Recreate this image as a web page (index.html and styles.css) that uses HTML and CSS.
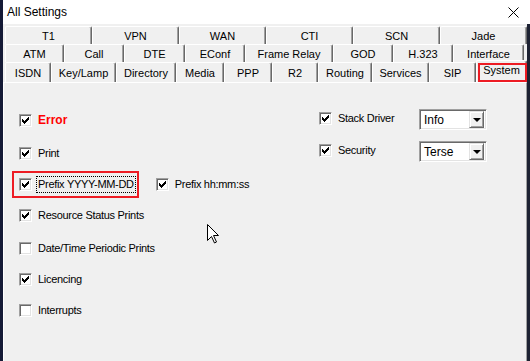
FILE: index.html
```html
<!DOCTYPE html>
<html lang="en">
<head>
    <meta charset="UTF-8">
    <title>All Settings</title>
    <link rel="stylesheet" href="styles.css">
</head>
<body>
    <div class="window">
        <div class="titlebar">
            <span class="title">All Settings</span>
            <svg class="close" width="11" height="11" viewBox="0 0 11 11">
                <path d="M0.5 0.5 L10.5 10.5 M10.5 0.5 L0.5 10.5" stroke="#000" stroke-width="1" fill="none"/>
            </svg>
        </div>

        <div class="dialog">
            <div class="tabs">
                <div class="tab-row row-back">
                    <div class="tab">T1</div>
                    <div class="tab">VPN</div>
                    <div class="tab">WAN</div>
                    <div class="tab">CTI</div>
                    <div class="tab">SCN</div>
                    <div class="tab">Jade</div>
                </div>
                <div class="tab-row row-mid">
                    <div class="tab">ATM</div>
                    <div class="tab">Call</div>
                    <div class="tab">DTE</div>
                    <div class="tab">EConf</div>
                    <div class="tab">Frame Relay</div>
                    <div class="tab">GOD</div>
                    <div class="tab">H.323</div>
                    <div class="tab">Interface</div>
                </div>
                <div class="tab-row row-front">
                    <div class="tab">ISDN</div>
                    <div class="tab">Key/Lamp</div>
                    <div class="tab">Directory</div>
                    <div class="tab">Media</div>
                    <div class="tab">PPP</div>
                    <div class="tab">R2</div>
                    <div class="tab">Routing</div>
                    <div class="tab">Services</div>
                    <div class="tab">SIP</div>
                    <div class="tab active">System</div>
                </div>
            </div>

            <div class="panel">
                <div class="col-left">
                    <div class="row">
                        <span class="box checked"><svg width="13" height="13" viewBox="0 0 13 13"><path d="M3 5h1v3h-1zM4 6h1v3h-1zM5 7h1v3h-1zM6 6h1v3h-1zM7 5h1v3h-1zM8 4h1v3h-1zM9 3h1v3h-1z"/></svg></span>
                        <span class="label error">Error</span>
                    </div>
                    <div class="row">
                        <span class="box checked"><svg width="13" height="13" viewBox="0 0 13 13"><path d="M3 5h1v3h-1zM4 6h1v3h-1zM5 7h1v3h-1zM6 6h1v3h-1zM7 5h1v3h-1zM8 4h1v3h-1zM9 3h1v3h-1z"/></svg></span>
                        <span class="label">Print</span>
                    </div>
                    <div class="row">
                        <div class="marked">
                            <span class="box checked"><svg width="13" height="13" viewBox="0 0 13 13"><path d="M3 5h1v3h-1zM4 6h1v3h-1zM5 7h1v3h-1zM6 6h1v3h-1zM7 5h1v3h-1zM8 4h1v3h-1zM9 3h1v3h-1z"/></svg></span>
                            <span class="label focused">Prefix YYYY-MM-DD</span>
                        </div>
                        <span class="box checked second"><svg width="13" height="13" viewBox="0 0 13 13"><path d="M3 5h1v3h-1zM4 6h1v3h-1zM5 7h1v3h-1zM6 6h1v3h-1zM7 5h1v3h-1zM8 4h1v3h-1zM9 3h1v3h-1z"/></svg></span>
                        <span class="label">Prefix hh:mm:ss</span>
                    </div>
                    <div class="row">
                        <span class="box checked"><svg width="13" height="13" viewBox="0 0 13 13"><path d="M3 5h1v3h-1zM4 6h1v3h-1zM5 7h1v3h-1zM6 6h1v3h-1zM7 5h1v3h-1zM8 4h1v3h-1zM9 3h1v3h-1z"/></svg></span>
                        <span class="label">Resource Status Prints</span>
                    </div>
                    <div class="row spaced">
                        <span class="box"></span>
                        <span class="label">Date/Time Periodic Prints</span>
                    </div>
                    <div class="row">
                        <span class="box checked"><svg width="13" height="13" viewBox="0 0 13 13"><path d="M3 5h1v3h-1zM4 6h1v3h-1zM5 7h1v3h-1zM6 6h1v3h-1zM7 5h1v3h-1zM8 4h1v3h-1zM9 3h1v3h-1z"/></svg></span>
                        <span class="label">Licencing</span>
                    </div>
                    <div class="row">
                        <span class="box"></span>
                        <span class="label">Interrupts</span>
                    </div>
                </div>

                <div class="col-right">
                    <div class="rrow">
                        <div class="rcheck">
                            <span class="box checked"><svg width="13" height="13" viewBox="0 0 13 13"><path d="M3 5h1v3h-1zM4 6h1v3h-1zM5 7h1v3h-1zM6 6h1v3h-1zM7 5h1v3h-1zM8 4h1v3h-1zM9 3h1v3h-1z"/></svg></span>
                            <span class="label">Stack Driver</span>
                        </div>
                        <div class="combo">
                            <span class="combo-text">Info</span>
                            <span class="combo-btn"><span class="arrow"></span></span>
                        </div>
                    </div>
                    <div class="rrow">
                        <div class="rcheck">
                            <span class="box checked"><svg width="13" height="13" viewBox="0 0 13 13"><path d="M3 5h1v3h-1zM4 6h1v3h-1zM5 7h1v3h-1zM6 6h1v3h-1zM7 5h1v3h-1zM8 4h1v3h-1zM9 3h1v3h-1z"/></svg></span>
                            <span class="label">Security</span>
                        </div>
                        <div class="combo">
                            <span class="combo-text">Terse</span>
                            <span class="combo-btn"><span class="arrow"></span></span>
                        </div>
                    </div>
                </div>

                <!-- mouse pointer over the panel -->
                <svg class="cursor" width="13" height="20" viewBox="0 0 13 20">
                    <path d="M0.5 0.5 V16.5 L4.5 12.5 L7.5 19 L9.5 18 L6.5 11.5 H11.5 Z" fill="#fff" stroke="#000" stroke-width="1"/>
                </svg>
            </div>
        </div>
    </div>
</body>
</html>
```

FILE: styles.css
```css
body {
    margin: 0;
    font-family: "Liberation Sans", Arial, sans-serif;
    font-size: 11px;
    color: #000;
    background-color: #f0f0f0;
}
.window {
    width: 530px;
    height: 361px;
    display: flex;
    flex-direction: column;
    overflow: hidden;
}
.titlebar {
    height: 24px;
    flex: none;
    background-color: #fff;
    border-left: 3px solid #151a36;
    padding-left: 4px;
    display: flex;
    align-items: center;
}
.title {
    font-size: 12px;
}
.close {
    margin-left: auto;
    margin-right: 11px;
}
.dialog {
    flex: 1;
    display: flex;
    flex-direction: column;
    background-color: #f0f0f0;
    border-left: 3px solid #151a36;
    border-right: 3px solid #1d2233;
}
.tabs {
    padding: 2px 0 0 2px;
}
.tab-row {
    display: grid;
    height: 18px;
}
.row-back {
    grid-template-columns: repeat(6, 1fr);
}
.row-mid {
    grid-template-columns: 59px 60px 61px 60px 88px 60px 60px 71px;
}
.row-front {
    grid-template-columns: 46px 65px 60px 48px 48px 46px 54px 57px 47px 51px;
    height: 20px;
}
.tab {
    display: flex;
    align-items: center;
    justify-content: center;
    border-top: 1px solid #fff;
    border-left: 1px solid #fff;
    border-right: 1px solid #696969;
    box-shadow: inset -1px 0 #a0a0a0;
    border-radius: 2px 2px 0 0;
    background-color: #f0f0f0;
    white-space: nowrap;
}
.tab.active {
    position: relative;
    margin-top: -2px;
    padding-bottom: 4px;
}
.tab.active::after {
    content: "";
    position: absolute;
    left: 1px;
    top: 2px;
    right: -1px;
    bottom: 0;
    border: 2px solid #ed1c24;
}
.panel {
    flex: 1;
    position: relative;
    display: flex;
    border-top: 1px solid #fff;
    border-left: 1px solid #fff;
    border-right: 1px solid #a0a0a0;
    padding-left: 15px;
}
.col-left {
    width: 300px;
    padding-top: 31px;
    display: flex;
    flex-direction: column;
    gap: 18px;
}
.row {
    height: 13px;
    display: flex;
    align-items: center;
}
.row:first-child {
    margin-bottom: 2px;
}
.row.spaced {
    margin-top: 2px;
}
.box {
    flex: none;
    width: 13px;
    height: 13px;
    box-sizing: border-box;
    background-color: #fff;
    border: 1px solid;
    border-color: #a0a0a0 #fff #fff #a0a0a0;
    box-shadow: inset 1px 1px #696969, inset -1px -1px #e3e3e3;
    position: relative;
}
.box svg {
    position: absolute;
    left: -1px;
    top: -1px;
}
.box.second {
    margin-left: 17px;
}
.label {
    margin-left: 4px;
    padding: 1px 1px 2px;
    border: 1px dotted transparent;
    white-space: nowrap;
    letter-spacing: -0.3px;
}
.label.focused {
    border-color: #000;
}
.error {
    color: #ff0000;
    font-weight: bold;
    font-size: 12px;
    letter-spacing: 0;
}
.marked {
    display: flex;
    align-items: center;
    height: 23px;
    margin-left: -7px;
    padding: 0 1px 0 5px;
    border: 2px solid #ed1c24;
}
.col-right {
    padding-top: 26px;
    display: flex;
    flex-direction: column;
    gap: 11px;
}
.rrow {
    display: grid;
    grid-template-columns: 100px 68px;
    align-items: center;
    height: 21px;
}
.rcheck {
    display: flex;
    align-items: center;
    margin-top: -2px;
}
.combo {
    height: 21px;
    box-sizing: border-box;
    display: flex;
    align-items: center;
    background-color: #fff;
    border: 1px solid;
    border-color: #a0a0a0 #fff #fff #a0a0a0;
    box-shadow: inset 1px 1px #696969, inset -1px -1px #e3e3e3;
    padding: 2px;
}
.combo-text {
    flex: 1;
    font-size: 12px;
    padding-left: 2px;
}
.combo-btn {
    width: 15px;
    height: 17px;
    box-sizing: border-box;
    background-color: #f0f0f0;
    border: 1px solid;
    border-color: #e3e3e3 #696969 #696969 #e3e3e3;
    box-shadow: inset 1px 1px #fff, inset -1px -1px #a0a0a0;
    display: flex;
    align-items: center;
    justify-content: center;
}
.arrow {
    width: 0;
    height: 0;
    border-left: 4px solid transparent;
    border-right: 4px solid transparent;
    border-top: 4px solid #000;
}
.cursor {
    position: absolute;
    left: 203px;
    top: 141px;
}
```
